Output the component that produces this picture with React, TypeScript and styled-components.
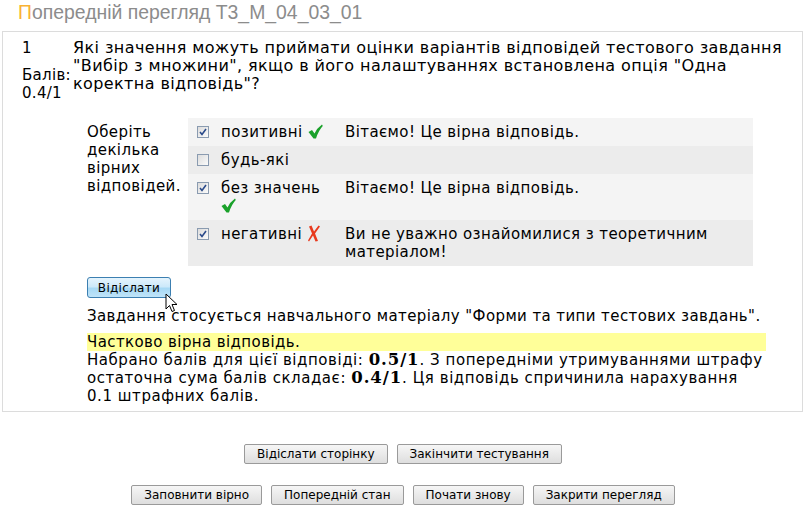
import React from "react";
import styled, { createGlobalStyle } from "styled-components";

const Global = createGlobalStyle`
  html, body { margin: 0; padding: 0; background: #fff; }
  body { font-family: "DejaVu Sans", Verdana, sans-serif; color: #000; }
`;

const Page = styled.div`
  width: 806px;
  height: 512px;
  overflow: hidden;
`;

const Title = styled.h2`
  margin: 0;
  padding: 0 0 0 18px;
  height: 31px;
  line-height: 24px;
  font-family: "Liberation Sans", Arial, sans-serif;
  font-weight: normal;
  font-size: 19.4px;
  color: #8c8c8c;
`;

const FirstLetter = styled.span`
  color: #f9b233;
`;

const QuestionBox = styled.div`
  margin: 0 3px 0 2px;
  border: 1px solid #dcdcdc;
  padding: 7px 10px 6px 19px;
  display: grid;
  grid-template-columns: 51px 1fr;
  font-size: 15px;
  line-height: 18px;
  letter-spacing: 0.4px;
`;

const Info = styled.div`
  display: flex;
  flex-direction: column;
  gap: 9px;
  letter-spacing: 0.3px;
`;

const Grade = styled.div``;

const Content = styled.div``;

const QText = styled.div`
  font-size: 16px;
  letter-spacing: 0.4px;
`;

const Body = styled.div`
  margin: 25px 0 0 14px;
`;

const Answers = styled.div`
  display: flex;
`;

const Prompt = styled.div`
  width: 101px;
  padding-top: 5px;
`;

const Table = styled.div`
  width: 565px;
`;

const Row = styled.div<{ $odd: boolean }>`
  display: grid;
  grid-template-columns: 24px 124px 1fr;
  padding: 5px 8px 5px 9px;
  background: ${(p) => (p.$odd ? "#f4f4f4" : "#ececec")};
`;

const Box = styled.span`
  width: 12px;
  height: 12px;
  margin-top: 3px;
  border: 1px solid #8a9bb0;
  background: linear-gradient(135deg, #dcdcdc, #fbfbfb);
  position: relative;
  box-sizing: border-box;
`;

const Label = styled.div`
  padding-right: 6px;
`;

const Feedback = styled.div``;

const SubmitButton = styled.button`
  display: block;
  margin: 11px 0 0 0;
  width: 84px;
  height: 21px;
  border: 1px solid #3c7fb1;
  border-radius: 3px;
  background: linear-gradient(#e5f4fd 0%, #cde9fa 45%, #a7d9f5 55%, #c0e4f9 100%);
  font-family: "DejaVu Sans", Verdana, sans-serif;
  font-size: 12px;
  letter-spacing: 0.3px;
  color: #000;
  padding: 0;
  position: relative;
`;

const Cursor = styled.svg`
  position: absolute;
  left: 77px;
  top: 15px;
`;

const Relates = styled.div`
  margin-top: 9px;
`;

const Outcome = styled.div`
  margin-top: 8px;
  width: 679px;
  letter-spacing: 0.55px;
`;

const Partial = styled.div`
  background: #ffff99;
  letter-spacing: 0.4px;
`;

const Bold = styled.b`
  font-family: "DejaVu Serif", "Liberation Serif", serif;
  font-size: 16.5px;
  letter-spacing: 0.9px;
`;

const ButtonRow = styled.div<{ $top: number }>`
  display: flex;
  justify-content: center;
  gap: 9px;
  margin-top: ${(p) => p.$top}px;
`;

const GrayButton = styled.button`
  height: 20px;
  padding: 0 12px;
  border: 1px solid #9a9a9a;
  border-radius: 2px;
  background: linear-gradient(#f6f6f6, #dedede);
  font-family: "DejaVu Sans", Tahoma, sans-serif;
  font-size: 12px;
  color: #000;
`;

const Check = () => (
  <svg width="15" height="15" viewBox="0 0 15 15" style={{ verticalAlign: "-2px" }}>
    <path d="M0.5 8 L4 6 L6.5 9.5 Q9 4 14 0.5 L14.8 2 Q10.5 6.5 8 14.5 L5.5 14.5 Z" fill="#1aa12a" />
  </svg>
);

const Cross = () => (
  <svg width="14" height="17" viewBox="0 0 14 17" style={{ verticalAlign: "-3px" }}>
    <path d="M2 1.5 L4.5 0.5 L7 6.5 L11.5 0.5 L13 1.5 L8 8.5 L11 16 L8.5 16.5 L6 10.5 L2 16.5 L1 15.5 L5 8.5 Z" fill="#e8391d" />
  </svg>
);

const Tick = () => (
  <svg width="10" height="10" viewBox="0 0 10 10" style={{ position: "absolute", left: 0, top: 0 }}>
    <path d="M2 5 L4 7.5 L8 2" stroke="#2a4a8a" strokeWidth="1.6" fill="none" />
  </svg>
);

const rows = [
  { checked: true, label: "позитивні", mark: "ok", fb: "Вітаємо! Це вірна відповідь." },
  { checked: false, label: "будь-які", mark: "", fb: "" },
  { checked: true, label: "без значень", mark: "ok", fb: "Вітаємо! Це вірна відповідь." },
  { checked: true, label: "негативні", mark: "bad", fb: "Ви не уважно ознайомилися з теоретичним матеріалом!" },
];

export default function App() {
  return (
    <Page>
      <Global />
      <Title>
        <FirstLetter>П</FirstLetter>опередній перегляд Т3_М_04_03_01
      </Title>
      <QuestionBox>
        <Info>
          <div>1</div>
          <Grade>
            Балів:
            <br />
            0.4/1
          </Grade>
        </Info>
        <Content>
          <QText>
            Які значення можуть приймати оцінки варіантів відповідей тестового завдання "Вибір з множини", якщо в
            його налаштуваннях встановлена опція "Одна коректна відповідь"?
          </QText>
          <Body>
            <Answers>
              <Prompt>Оберіть декілька вірних відповідей.</Prompt>
              <Table>
                {rows.map((r, i) => (
                  <Row key={i} $odd={i % 2 === 0}>
                    <Box>{r.checked && <Tick />}</Box>
                    <Label>
                      {r.label} {r.mark === "ok" && <Check />}
                      {r.mark === "bad" && <Cross />}
                    </Label>
                    <Feedback>{r.fb}</Feedback>
                  </Row>
                ))}
              </Table>
            </Answers>
            <SubmitButton>
              Відіслати
              <Cursor width="13" height="21" viewBox="0 0 13 21">
                <path d="M1 1 L1 16 L4.5 12.5 L7 18.5 L9.5 17.5 L7 11.5 L12 11.5 Z" fill="#fff" stroke="#000" strokeWidth="1" />
              </Cursor>
            </SubmitButton>
            <Relates>Завдання стосується навчального матеріалу "Форми та типи тестових завдань".</Relates>
            <Outcome>
              <Partial>Частково вірна відповідь.</Partial>
              Набрано балів для цієї відповіді: <Bold>0.5/1</Bold>. З попередніми утримуваннями штрафу остаточна сума
              балів складає: <Bold>0.4/1</Bold>. Ця відповідь спричинила нарахування 0.1 штрафних балів.
            </Outcome>
          </Body>
        </Content>
      </QuestionBox>
      <ButtonRow $top={32}>
        <GrayButton>Відіслати сторінку</GrayButton>
        <GrayButton>Закінчити тестування</GrayButton>
      </ButtonRow>
      <ButtonRow $top={21}>
        <GrayButton>Заповнити вірно</GrayButton>
        <GrayButton>Попередній стан</GrayButton>
        <GrayButton>Почати знову</GrayButton>
        <GrayButton>Закрити перегляд</GrayButton>
      </ButtonRow>
    </Page>
  );
}
